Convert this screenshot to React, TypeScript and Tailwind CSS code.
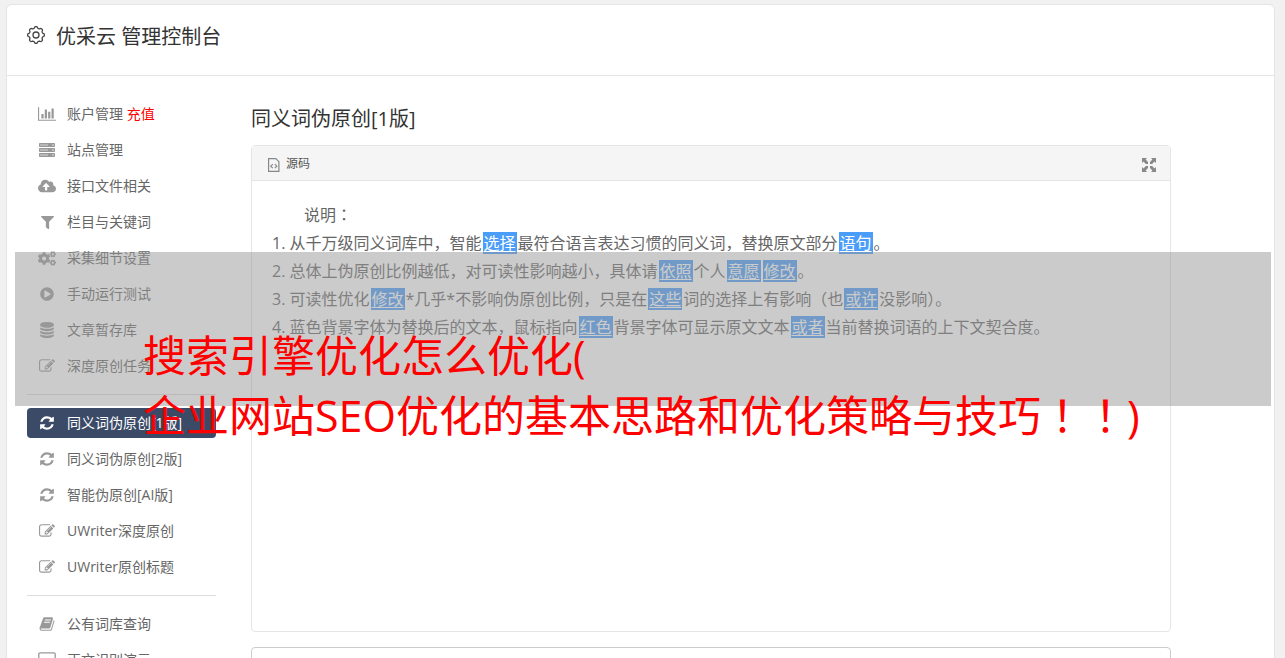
import type { ReactNode } from "react";
import { FaCloudUploadAlt, FaCogs, FaFilter, FaPlayCircle } from "react-icons/fa";

const Glyph = ({ d, width = 1792, size }: { d: string; width?: number; size: string }) => (
  <svg viewBox={`0 0 ${width} 1792`} className={size} fill="currentColor" aria-hidden="true">
    <path d={d} />
  </svg>
);

const ChartIcon = () => (
  <Glyph
    width={2048}
    size="h-4 w-[18px]"
    d="M640 896v512H384V896h256zm384-512v1024H768V384h256zm1024 1152v128H0V128h128v1408h1920zm-640-896v768h-256V640h256zm384-384v1152h-256V256h256z"
  />
);

const EditIcon = () => (
  <Glyph
    size="h-4 w-4"
    d="M888 1184l116-116-152-152-116 116v56h96v96h56zm440-720q-16-16-33 1l-350 350q-17 17-1 33t33-1l350-350q17-17 1-33zm80 594v190q0 119-84.5 203.5t-203.5 84.5h-832q-119 0-203.5-84.5t-84.5-203.5v-832q0-119 84.5-203.5t203.5-84.5h832q63 0 117 25 15 7 18 23 3 17-9 29l-49 49q-14 14-32 8-23-6-45-6h-832q-66 0-113 47t-47 113v832q0 66 47 113t113 47h832q66 0 113-47t47-113v-126q0-13 9-22l64-64q15-15 35-7t20 29zm-96-738l288 288-672 672h-288v-288zm444 132l-92 92-288-288 92-92q28-28 68-28t68 28l152 152q28 28 28 68t-28 68z"
  />
);

const RefreshIcon = () => (
  <Glyph
    size="h-4 w-4"
    d="M1639 1056q0 5-1 7-64 268-268 434.5t-478 166.5q-146 0-282.5-55t-243.5-157l-129 129q-19 19-45 19t-45-19-19-45v-448q0-26 19-45t45-19h448q26 0 45 19t19 45-19 45l-137 137q71 66 161 102t187 36q134 0 250-65t186-179q11-17 53-117 8-23 30-23h192q13 0 22.5 9.5t9.5 22.5zm25-800v448q0 26-19 45t-45 19h-448q-26 0-45-19t-19-45 19-45l138-138q-148-137-349-137-134 0-250 65t-186 179q-11 17-53 117-8 23-30 23h-199q-13 0-22.5-9.5t-9.5-22.5v-7q65-268 270-434.5t480-166.5q146 0 284 55.5t245 156.5l130-129q19-19 45-19t45 19 19 45z"
  />
);

const DatabaseIcon = () => (
  <Glyph
    size="h-4 w-4"
    d="M896 768q237 0 443-43t325-127v170q0 69-103 128t-280 93.5-385 34.5-385-34.5-280-93.5-103-128v-170q119 84 325 127t443 43zm0 768q237 0 443-43t325-127v170q0 69-103 128t-280 93.5-385 34.5-385-34.5-280-93.5-103-128v-170q119 84 325 127t443 43zm0-384q237 0 443-43t325-127v170q0 69-103 128t-280 93.5-385 34.5-385-34.5-280-93.5-103-128v-170q119 84 325 127t443 43zm0-1152q208 0 385 34.5t280 93.5 103 128v128q0 69-103 128t-280 93.5-385 34.5-385-34.5-280-93.5-103-128v-128q0-69 103-128t280-93.5 385-34.5z"
  />
);

const BookIcon = () => (
  <Glyph
    size="h-4 w-4"
    d="M1703 478q40 57 18 129l-275 906q-19 64-76.5 107.5t-122.5 43.5h-923q-77 0-148.5-53.5t-99.5-131.5q-24-67-2-127 0-4 3-27t4-37q1-8-3-21.5t-3-19.5q2-11 8-21t16.5-23.5 16.5-23.5q23-38 45-91.5t30-91.5q3-10 .5-30t-.5-28q3-11 17-28t17-23q21-36 42-92t25-90q1-9-2.5-32t.5-28q4-13 22-30.5t22-22.5q19-26 42.5-84.5t27.5-96.5q1-8-3-25.5t-2-26.5q2-8 9-18t18-23 17-21q8-12 16.5-30.5t15-35 16-36 19.5-32 26.5-23.5 36-11.5 47.5 5.5l-1 3q38-9 51-9h761q74 0 114 56t18 130l-274 906q-36 119-71.5 153.5t-128.5 34.5h-869q-27 0-38 15-11 16-1 43 24 70 144 70h923q29 0 56-15.5t35-41.5l300-987q7-22 5-57 38 15 59 43zm-1064 2q-4 13 2 22.5t20 9.5h608q13 0 25.5-9.5t16.5-22.5l21-64q4-13-2-22.5t-20-9.5h-608q-13 0-25.5 9.5t-16.5 22.5zm-83 256q-4 13 2 22.5t20 9.5h608q13 0 25.5-9.5t16.5-22.5l21-64q4-13-2-22.5t-20-9.5h-608q-13 0-25.5 9.5t-16.5 22.5z"
  />
);

const ServerIcon = () => (
  <svg viewBox="0 0 16 14" className="h-[14px] w-4" aria-hidden="true">
    {[0, 5, 10].map((y) => (
      <g key={y}>
        <rect x="0" y={y} width="16" height="4" rx="0.8" fill="currentColor" />
        <path d={`M1 ${y + 2}h8`} stroke="#fff" strokeWidth="1" opacity="0.6" />
        <circle cx="14" cy={y + 2} r="0.7" fill="#fff" />
      </g>
    ))}
  </svg>
);

const DesktopIcon = () => (
  <svg viewBox="0 0 18 16" className="h-4 w-[18px]" fill="none" stroke="currentColor" aria-hidden="true">
    <rect x="0.8" y="0.8" width="16.4" height="11" rx="1.2" strokeWidth="1.3" />
    <path d="M9 12v3M5.5 15.2h7" strokeWidth="1.3" />
  </svg>
);

// eight rounded teeth around the hub
const gearPath =
  Array.from({ length: 96 }, (_, i) => {
    const a = (i / 96) * Math.PI * 2;
    const r = 7.6 + 0.75 * Math.tanh(2.2 * Math.cos(8 * a));
    return `${i ? "L" : "M"}${(9 + r * Math.cos(a)).toFixed(2)} ${(9 + r * Math.sin(a)).toFixed(2)}`;
  }).join("") + "Z";

const GearIcon = () => (
  <svg viewBox="0 0 18 18" className="h-[18px] w-[18px]" fill="none" stroke="#444" strokeWidth="1.3" aria-hidden="true">
    <path d={gearPath} strokeLinejoin="round" />
    <circle cx="9" cy="9" r="3" />
  </svg>
);

const CodeFileIcon = () => (
  <svg viewBox="0 0 12 14" className="h-[14px] w-3" fill="none" stroke="#888" aria-hidden="true">
    <path d="M0.6 0.6h7.2l3.1 3.1v9.7H0.6z" strokeWidth="1.2" />
    <path d="M4.8 6.2L2.8 8.2l2 2M6.8 6.2l2 2-2 2" strokeWidth="1.2" />
  </svg>
);

const ExpandIcon = () => (
  <svg viewBox="0 0 14 14" className="h-[14px] w-[14px]" fill="#888" aria-hidden="true">
    {[0, 90, 180, 270].map((turn) => (
      <path key={turn} transform={`rotate(${turn} 7 7)`} d="M0 0h5L3.6 1.5 6 3.9V6H3.9L1.5 3.6 0 5z" />
    ))}
  </svg>
);

type Item = { icon: ReactNode; label: string; extra?: string; active?: boolean };

const groups: Item[][] = [
  [
    { icon: <ChartIcon />, label: "账户管理", extra: "充值" },
    { icon: <ServerIcon />, label: "站点管理" },
    { icon: <FaCloudUploadAlt className="h-[18px] w-[18px]" />, label: "接口文件相关" },
    { icon: <FaFilter className="h-[13px] w-[13px]" />, label: "栏目与关键词" },
    { icon: <FaCogs className="h-[17px] w-[18px]" />, label: "采集细节设置" },
    { icon: <FaPlayCircle className="h-[14px] w-[14px]" />, label: "手动运行测试" },
    { icon: <DatabaseIcon />, label: "文章暂存库" },
    { icon: <EditIcon />, label: "深度原创任务" },
  ],
  [
    { icon: <RefreshIcon />, label: "同义词伪原创[1版]", active: true },
    { icon: <RefreshIcon />, label: "同义词伪原创[2版]" },
    { icon: <RefreshIcon />, label: "智能伪原创[AI版]" },
    { icon: <EditIcon />, label: "UWriter深度原创" },
    { icon: <EditIcon />, label: "UWriter原创标题" },
  ],
  [
    { icon: <BookIcon />, label: "公有词库查询" },
    { icon: <DesktopIcon />, label: "正文识别演示" },
  ],
];

const NavItem = ({ icon, label, extra, active }: Item) => (
  <li>
    <a
      href="#"
      className={`flex h-[30px] items-center gap-[10px] rounded px-[10px] text-sm whitespace-nowrap ${
        active ? "bg-[#3a4a67] text-white" : "text-[#666]"
      }`}
    >
      <span className={`flex w-5 shrink-0 justify-center ${active ? "text-white" : "text-[#999]"}`}>{icon}</span>
      <span>
        {label}
        {extra && <span className="text-[#f00]"> {extra}</span>}
      </span>
    </a>
  </li>
);

// punctuation set in the middle of its cell
const P = ({ children }: { children: string }) => (
  <span className="font-['Noto_Sans_CJK_TC','Noto_Sans_CJK_SC',sans-serif] leading-none">{children}</span>
);

const Word = ({ children }: { children: string }) => (
  <a href="#" className="mx-px bg-[#4a9df8] px-px text-white underline underline-offset-2">
    {children}
  </a>
);

export default function App() {
  return (
    <div className="relative h-screen overflow-hidden bg-[#f1f1f1] pt-1 pr-[10px] pl-[6px] font-['Open_Sans','Noto_Sans_CJK_SC',sans-serif] text-[#333]">
      <div className="min-h-full rounded-t-md border border-[#e5e5e5] bg-white">
        <header className="flex h-[71px] gap-[11px] border-b border-[#e5e5e5] pt-4 pl-5">
          <span className="pt-[5px]">
            <GearIcon />
          </span>
          <h1 className="text-xl leading-8">优采云 管理控制台</h1>
        </header>

        <div className="flex pt-[23px] pr-[103px] pl-5">
          <nav className="w-[189px] shrink-0">
            {groups.map((items, index) => (
              <div key={index}>
                {index > 0 && <hr className="my-[13px] border-[#ddd]" />}
                <ul className="flex flex-col gap-[6px]">
                  {items.map((item) => (
                    <NavItem key={item.label} {...item} />
                  ))}
                </ul>
              </div>
            ))}
          </nav>

          <main className="ml-[35px] min-w-0 flex-1">
            <h2 className="mt-1 mb-[10px] text-xl leading-8">同义词伪原创[1版]</h2>

            <section className="rounded border border-[#e5e5e5]">
              <div className="flex h-[35px] items-center border-b border-[#e5e5e5] bg-[#f5f5f5] pt-[3px] pr-[14px] pl-4">
                <CodeFileIcon />
                <span className="mb-px ml-[6px] text-xs text-[#555]">源码</span>
                <button type="button" aria-label="全屏" className="ml-auto">
                  <ExpandIcon />
                </button>
              </div>
              <div className="min-h-[450px] p-5 text-base leading-7 text-[#666]">
                <p className="pl-8">
                  说明<P>：</P>
                </p>
                <p>
                  1. 从千万级同义词库中，智能<Word>选择</Word>最符合语言表达习惯的同义词，替换原文部分
                  <Word>语句</Word>。
                </p>
                <p>
                  2. 总体上伪原创比例越低，对可读性影响越小，具体请<Word>依照</Word>个人
                  <Word>意愿</Word>
                  <Word>修改</Word>。
                </p>
                <p>
                  3. 可读性优化<Word>修改</Word>*几乎*不影响伪原创比例，只是在<Word>这些</Word>
                  词的选择上有影响（也<Word>或许</Word>没影响）。
                </p>
                <p>
                  4. 蓝色背景字体为替换后的文本，鼠标指向<Word>红色</Word>背景字体可显示原文文本
                  <Word>或者</Word>当前替换词语的上下文契合度。
                </p>
              </div>
            </section>

            <textarea
              aria-label="原文"
              className="mt-[15px] block h-40 w-full resize-none rounded border border-[#ccc] bg-white p-3 text-sm"
            />
          </main>
        </div>
      </div>

      {/* Caption band */}
      <div className="absolute top-[252px] right-[14px] left-[15px] h-[154px] bg-[#979797]/50 pt-[74px] pl-32">
        <p className="text-[43px] leading-[60px] whitespace-nowrap text-[#f00]">
          搜索引擎优化怎么优化(
          <br />
          企业网站SEO优化的基本思路和优化策略与技巧<P>！！</P>)
        </p>
      </div>
    </div>
  );
}
